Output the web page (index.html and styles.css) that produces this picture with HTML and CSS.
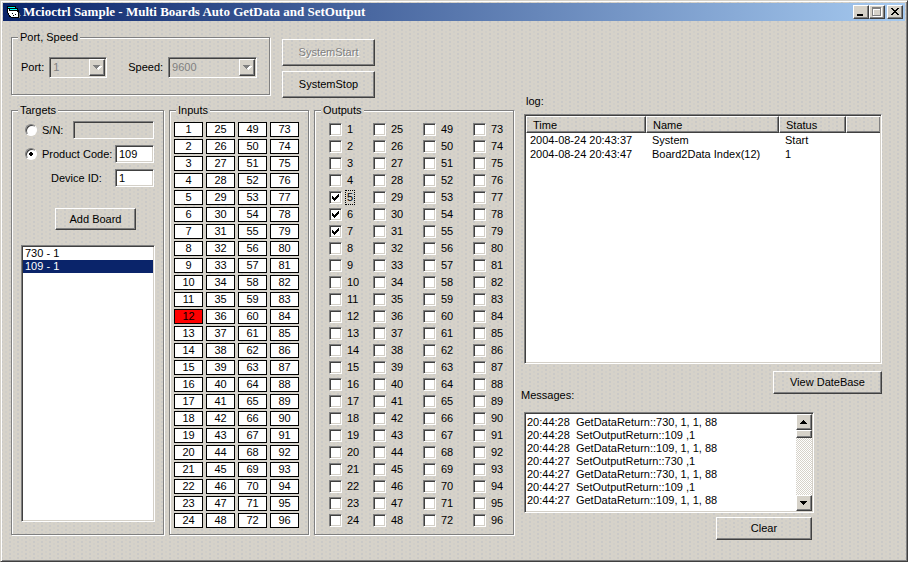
FILE: index.html
```
<!DOCTYPE html>
<html lang="en">
<head>
<meta charset="utf-8">
<title>Mcioctrl Sample</title>
<link rel="stylesheet" href="styles.css">
</head>
<body>
<div class="window">
  <header class="titlebar">
    <svg class="app-icon" viewBox="0 0 16 16" shape-rendering="crispEdges" aria-hidden="true">
      <path fill="#777" d="M12 9h1v2h1v1h-1v2h-2v-2h1z"/>
      <path fill="#000" d="M0 2h9v2h2v2h1v8H4v-1H2v-2H1V9H0z"/>
      <path fill="#0ff" d="M1 3h7v1H1zM3 5h7v1H3z"/>
      <path fill="#fff" d="M1 5h1v4H1zM2 7h1v4H2zM3 7h7v1h1v5H4v-1H3z"/>
      <path fill="#000" d="M5 9h1v1H5zM8 10h1v1H8zM6 11h1v1H6z"/>
    </svg>
    <h1>Mcioctrl Sample - Multi Boards Auto GetData and SetOutput</h1>
    <div class="caption-buttons">
      <button class="raised" aria-label="Minimize"><svg viewBox="0 0 12 10" shape-rendering="crispEdges"><path d="M2 7h6v2H2z"/></svg></button>
      <button class="raised" aria-label="Maximize" disabled><svg viewBox="0 0 12 10" shape-rendering="crispEdges"><path fill="#fff" d="M2 1h9v9H2z"/><path fill="#808080" d="M1 0h9v9H1z"/><path fill="#fff" d="M2 2h7v6H2z"/><path fill="#d6d2c9" d="M3 3h6v5H3z"/></svg></button>
      <button class="raised close" aria-label="Close"><svg viewBox="0 0 12 10" shape-rendering="crispEdges"><path d="M2 1h2v1h1v1h2V2h1V1h2v1H9v1H8v1H7v1h1v1h1v1h1v1H8V7H7V6H5v1H4v1H2V7h1V6h1V5h1V4H4V3H3V2H2z"/></svg></button>
    </div>
  </header>
  <main class="client">
    <section class="left">
      <div class="top-row">
        <fieldset class="group port-group">
          <legend>Port, Speed</legend>
          <div class="port-fields">
            <label for="port">Port:</label>
            <div class="combo port sunken"><select id="port" disabled><option>1</option></select><span class="arrow raised"><svg viewBox="0 0 9 5" shape-rendering="crispEdges"><path fill="#fff" d="M2 1h7v1H8v1H7v1H6v1H5z"/><path fill="#808080" d="M0 0h7v1H6v1H5v1H4v1H3V3H2V2H1V1H0z"/></svg></span></div>
            <label class="speed-label" for="speed">Speed:</label>
            <div class="combo speed sunken"><select id="speed" disabled><option>9600</option></select><span class="arrow raised"><svg viewBox="0 0 9 5" shape-rendering="crispEdges"><path fill="#fff" d="M2 1h7v1H8v1H7v1H6v1H5z"/><path fill="#808080" d="M0 0h7v1H6v1H5v1H4v1H3V3H2V2H1V1H0z"/></svg></span></div>
          </div>
        </fieldset>
        <div class="system-buttons">
          <button class="btn raised" disabled>SystemStart</button>
          <button class="btn raised">SystemStop</button>
        </div>
      </div>
      <div class="groups">
        <fieldset class="group targets">
          <legend>Targets</legend>
          <div class="target-form">
            <div class="field"><input type="radio" name="target" id="by-sn"><label for="by-sn">S/N:</label><input class="sunken sn" type="text" aria-label="Serial number" disabled></div>
            <div class="field"><input type="radio" name="target" id="by-code" checked><label for="by-code">Product Code:</label><input class="sunken code" type="text" aria-label="Product code value" value="109"></div>
            <div class="field"><label class="device" for="device">Device ID:</label><input class="sunken code" type="text" id="device" value="1"></div>
          </div>
          <button class="btn raised add">Add Board</button>
          <select class="boards sunken" size="20" aria-label="Boards"><option>730 - 1</option><option selected>109 - 1</option></select>
        </fieldset>
        <fieldset class="group inputs">
          <legend>Inputs</legend>
          <div class="input-grid" id="inputs"></div>
        </fieldset>
        <fieldset class="group outputs">
          <legend>Outputs</legend>
          <div class="output-grid" id="outputs"></div>
        </fieldset>
      </div>
    </section>
    <section class="right">
      <h2>log:</h2>
      <div class="log sunken">
        <table>
          <colgroup><col class="c-time"><col class="c-name"><col class="c-status"><col></colgroup>
          <thead><tr><th>Time</th><th>Name</th><th>Status</th><th></th></tr></thead>
          <tbody>
            <tr><td>2004-08-24 20:43:37</td><td>System</td><td>Start</td><td></td></tr>
            <tr><td>2004-08-24 20:43:47</td><td>Board2Data Index(12)</td><td>1</td><td></td></tr>
          </tbody>
        </table>
      </div>
      <div class="view-row">
        <h2>Messages:</h2>
        <button class="btn raised view">View DateBase</button>
      </div>
      <div class="messages">
        <div class="message-box sunken">
          <ul>
            <li>20:44:28  GetDataReturn::730, 1, 1, 88</li>
            <li>20:44:28  SetOutputReturn::109 ,1</li>
            <li>20:44:28  GetDataReturn::109, 1, 1, 88</li>
            <li>20:44:27  SetOutputReturn::730 ,1</li>
            <li>20:44:27  GetDataReturn::730, 1, 1, 88</li>
            <li>20:44:27  SetOutputReturn::109 ,1</li>
            <li>20:44:27  GetDataReturn::109, 1, 1, 88</li>
          </ul>
          <div class="scrollbar">
            <button class="raised" aria-label="Scroll up"><svg viewBox="0 0 7 4" shape-rendering="crispEdges"><path d="M3 0h1v1h1v1h1v1h1v1H0V3h1V2h1V1h1z"/></svg></button>
            <span class="thumb raised"></span>
            <button class="raised down" aria-label="Scroll down"><svg viewBox="0 0 7 4" shape-rendering="crispEdges"><path d="M0 0h7v1H6v1H5v1H4v1H3V3H2V2H1V1H0z"/></svg></button>
          </div>
        </div>
        <button class="btn raised clear">Clear</button>
      </div>
    </section>
  </main>
</div>
<script src="app.js"></script>
</body>
</html>
```
FILE: styles.css
```
* { box-sizing: border-box; }

:root {
  --face: #d6d2c9;
  --texture: radial-gradient(circle at 1px 1px, #cac9c7 1px, transparent 1px) 0 0 / 8px 4px, radial-gradient(circle at 1px 1px, #d0cec9 1px, transparent 1px) 4px 2px / 8px 4px, var(--face);
}

body {
  margin: 0;
  font: 11px/13px "Liberation Sans", Arial, sans-serif;
  color: #000;
  background: var(--face);
}

button, input, select { font: inherit; color: inherit; margin: 0; border-radius: 0; }
h1, h2 { margin: 0; font-size: 11px; font-weight: normal; }
svg { display: block; }

.window {
  min-height: 100vh;
  padding: 1px;
  border: 1px solid var(--face);
  border-right-color: #404040;
  border-bottom-color: #404040;
  box-shadow: inset 1px 1px #fff, inset -1px -1px #808080;
  background: var(--texture);
}

.raised {
  border: 1px solid #fff;
  border-right-color: #404040;
  border-bottom-color: #404040;
  box-shadow: inset -1px -1px #808080;
  background: var(--face);
}

.sunken {
  border: 1px solid #808080;
  border-right-color: #fff;
  border-bottom-color: #fff;
  box-shadow: inset 1px 1px #404040, inset -1px -1px #d4d0c8;
  background: #fff;
}

.titlebar {
  display: flex;
  align-items: center;
  height: 18px;
  margin: 1px;
  padding: 0 2px 0 4px;
  background: linear-gradient(90deg, #0a246a, #a6caf0);
}
.app-icon { width: 16px; height: 16px; }
.titlebar h1 {
  flex: 1;
  font: bold 13px/18px "Liberation Serif", "Times New Roman", serif;
  color: #fff;
}
.caption-buttons { display: flex; }
.caption-buttons button { width: 16px; height: 14px; padding: 1px; }
.caption-buttons svg { width: 12px; height: 10px; }
.caption-buttons .close { margin-left: 2px; }

.client { display: flex; gap: 10px; padding: 9px 24px 20px 9px; }
.left { flex: none; }

.group {
  min-width: 0;
  margin: 0;
  padding: 0;
  border: 1px solid #808080;
  box-shadow: inset 1px 1px #fff, 1px 1px #fff;
}
.group legend { margin-left: 6px; padding: 0 2px; background: var(--texture); }

.top-row { display: flex; gap: 12px; }
.port-group { width: 259px; height: 64px; }
.port-fields { display: flex; align-items: center; padding: 13px 0 0 9px; }
.combo { display: flex; height: 21px; padding: 1px; background: none; color: #808080; }
.combo select { flex: 1; min-width: 0; appearance: none; border: 0; background: none; padding: 0 2px; opacity: 1; }
.combo .arrow { display: flex; align-items: center; justify-content: center; width: 16px; }
.combo svg { width: 9px; height: 5px; }
.port { width: 58px; margin-left: 5px; }
.speed { width: 89px; margin-left: 5px; }
.speed-label { margin-left: 21px; }

.system-buttons { display: flex; flex-direction: column; gap: 5px; padding-top: 8px; }
.btn { padding: 0; text-align: center; background: var(--texture); }
.btn:disabled { color: #808080; text-shadow: 1px 1px #fff; }
.system-buttons .btn { width: 93px; height: 27px; }

.groups { display: flex; gap: 5px; margin-top: 6px; }
.groups .group { height: 431px; }
.targets { width: 153px; }
.inputs { width: 140px; }
.outputs { width: 200px; }

.target-form { display: flex; flex-direction: column; gap: 6px; padding: 4px 9px 0 13px; }
.field { display: flex; align-items: center; }
.field label { margin-left: 5px; }
.field .device { margin-left: 26px; }
.field input[type="text"] { height: 18px; padding: 0 3px; margin-left: auto; }
.field .sn { width: 81px; background: none; }
.field .code { width: 39px; }
input[type="radio"] {
  appearance: none;
  width: 12px;
  height: 12px;
  border: 1px solid #808080;
  border-radius: 50%;
  border-right-color: #fff;
  border-bottom-color: #fff;
  box-shadow: inset 1px 1px #404040;
  background: #fff;
}
input[type="radio"]:checked { background: radial-gradient(circle, #000 2px, #fff 2px); }

.add { display: block; width: 81px; height: 22px; margin: 21px 0 0 43px; }
.boards {
  display: block;
  width: 134px;
  height: 277px;
  margin: 15px 0 0 9px;
  padding: 1px;
  outline: 0;
  overflow: hidden;
}
.boards option { min-height: 13px; padding: 0 2px; line-height: 13px; }
.boards option:checked { color: #fff; background: #0a246a linear-gradient(#0a246a, #0a246a); }

.input-grid {
  display: grid;
  grid-template: repeat(24, 15px) / repeat(4, 29px);
  grid-auto-flow: column;
  gap: 2px 3px;
  padding: 5px 0 0 4px;
}
.input-grid span { border: 1px solid #000; background: #fff; text-align: center; }
.input-grid .on { background: #f00; }

.output-grid {
  display: grid;
  grid-template: repeat(24, 17px) / 44px 50px 50px 40px;
  grid-auto-flow: column;
  padding: 4px 0 0 14px;
}
.output-grid label { display: flex; align-items: center; gap: 4px; }
.output-grid span { padding: 0 1px; }
.output-grid .focus { outline: 1px dotted #000; }
input[type="checkbox"] {
  appearance: none;
  width: 13px;
  height: 13px;
  border: 1px solid #808080;
  border-right-color: #fff;
  border-bottom-color: #fff;
  box-shadow: inset 1px 1px #404040, inset -1px -1px #d4d0c8;
  background: #fff;
}
input[type="checkbox"]:checked {
  background: #fff url("data:image/svg+xml,%3Csvg xmlns='http://www.w3.org/2000/svg' width='11' height='11' shape-rendering='crispEdges'%3E%3Cpath d='M2 4h1v1h1v1h1V5h1V4h1V3h1V2h1v3H8v1H7v1H6v1H5v1H4V8H3V7H2z'/%3E%3C/svg%3E") 0 0 no-repeat;
}

.right { flex: 1; min-width: 0; padding-top: 64px; }
.right h2 { margin-left: 2px; }
.log { height: 250px; margin-top: 6px; padding: 1px; }
table { width: 100%; border-collapse: separate; border-spacing: 0; table-layout: fixed; }
.c-time { width: 120px; }
.c-name { width: 133px; }
.c-status { width: 67px; }
th { height: 17px; padding: 1px 6px 0; font-weight: normal; text-align: left; border: 1px solid #fff; border-right-color: #404040; border-bottom-color: #404040; box-shadow: inset -1px -1px #808080; background: var(--texture); }
th:last-child { border-right: 0; }
td { height: 14px; padding: 0 6px; white-space: nowrap; }
td:first-child { padding-left: 4px; }
tbody tr:first-child td { padding-top: 1px; }

.view-row { display: flex; justify-content: space-between; align-items: flex-start; margin-top: 7px; }
.view-row h2 { margin: 18px 0 0 -3px; }
.view { width: 109px; height: 23px; }
.messages { width: 81%; margin-top: 10px; }
.message-box { display: flex; height: 101px; padding: 1px; }
ul { flex: 1; margin: 0; padding: 2px 1px; list-style: none; }
li { white-space: pre; }
.scrollbar { display: flex; flex-direction: column; width: 16px; background: repeating-conic-gradient(#fff 0 25%, #d6d2c9 0 50%) 0 0 / 2px 2px; }
.scrollbar button { display: flex; align-items: center; justify-content: center; height: 16px; padding: 0; }
.scrollbar svg { width: 7px; height: 4px; }
.thumb { height: 8px; }
.down { margin-top: auto; }
.clear { display: block; width: 96px; height: 23px; margin: 4px 2px 0 auto; }
```
FILE: app.js
```
const COUNT = 96;
const activeInputs = [12];
const activeOutputs = [5, 6, 7];
const focusedOutput = 5;

const inputs = document.getElementById("inputs");
const outputs = document.getElementById("outputs");

for (let n = 1; n <= COUNT; n++) {
  const cell = document.createElement("span");
  cell.textContent = n;
  if (activeInputs.includes(n)) cell.className = "on";
  inputs.append(cell);

  const label = document.createElement("label");
  const box = document.createElement("input");
  box.type = "checkbox";
  box.checked = activeOutputs.includes(n);
  const text = document.createElement("span");
  text.textContent = n;
  if (n === focusedOutput) text.className = "focus";
  label.append(box, text);
  outputs.append(label);
}
```
